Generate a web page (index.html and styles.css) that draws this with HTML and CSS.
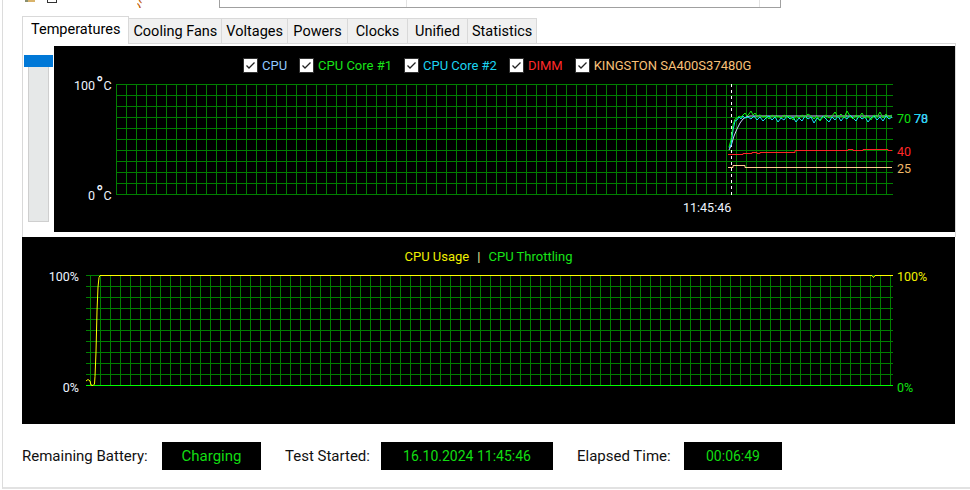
FILE: index.html
```html
<!DOCTYPE html>
<html>
<head>
<meta charset="utf-8">
<link rel="stylesheet" href="styles.css">
</head>
<body>
<div class="window">
  <div class="topstrip">
    <div class="ts-icon"></div>
    <div class="ts-check"></div>
    <div class="ts-paren"><span>( )</span></div>
    <div class="ts-box"><div class="ts-div ts-div1"></div><div class="ts-div ts-div2"></div></div>
  </div>
  <div class="tabs">
    <div class="tab active">Temperatures</div>
    <div class="tab">Cooling Fans</div>
    <div class="tab">Voltages</div>
    <div class="tab">Powers</div>
    <div class="tab">Clocks</div>
    <div class="tab">Unified</div>
    <div class="tab">Statistics</div>
  </div>
  <div class="tabpage">
    <div class="sidebar">
      <div class="sb-sel"></div>
      <div class="sb-list"></div>
    </div>
    <div class="temp-chart">
      <div class="temp-legend">
        <div class="lg-item"><svg class="cb" width="15" height="15" viewBox="0 0 15 15"><rect x="0.5" y="0.5" width="14" height="14" fill="#fff" stroke="#333"/><path d="M3.5 7.5L6 10L11.5 4.5" fill="none" stroke="#222" stroke-width="1.3"/></svg><span class="c-cpu">CPU</span></div>
        <div class="lg-item"><svg class="cb" width="15" height="15" viewBox="0 0 15 15"><rect x="0.5" y="0.5" width="14" height="14" fill="#fff" stroke="#333"/><path d="M3.5 7.5L6 10L11.5 4.5" fill="none" stroke="#222" stroke-width="1.3"/></svg><span class="c-core1">CPU Core #1</span></div>
        <div class="lg-item"><svg class="cb" width="15" height="15" viewBox="0 0 15 15"><rect x="0.5" y="0.5" width="14" height="14" fill="#fff" stroke="#333"/><path d="M3.5 7.5L6 10L11.5 4.5" fill="none" stroke="#222" stroke-width="1.3"/></svg><span class="c-core2">CPU Core #2</span></div>
        <div class="lg-item"><svg class="cb" width="15" height="15" viewBox="0 0 15 15"><rect x="0.5" y="0.5" width="14" height="14" fill="#fff" stroke="#333"/><path d="M3.5 7.5L6 10L11.5 4.5" fill="none" stroke="#222" stroke-width="1.3"/></svg><span class="c-dimm">DIMM</span></div>
        <div class="lg-item"><svg class="cb" width="15" height="15" viewBox="0 0 15 15"><rect x="0.5" y="0.5" width="14" height="14" fill="#fff" stroke="#333"/><path d="M3.5 7.5L6 10L11.5 4.5" fill="none" stroke="#222" stroke-width="1.3"/></svg><span class="c-ssd">KINGSTON SA400S37480G</span></div>
      </div>
      <svg class="plot temp-plot" width="901" height="162" viewBox="54 70 901 162">
        <defs>
          <pattern id="tgrid" x="116" y="84" width="10" height="11" patternUnits="userSpaceOnUse">
            <path d="M0.5 0V11M0 0.5H10" stroke="#008000" fill="none"/>
          </pattern>
        </defs>
        <rect x="116" y="84" width="777" height="111" fill="url(#tgrid)"/>
        <path d="M731.5 84V195" stroke="#fff" stroke-dasharray="3 3"/>
        <polyline class="ln" stroke="#c8d4ff" points="729,150 731,146 734,136 737,129 740,123 743,119 746,117 750,116 892,116"/>
        <polyline class="ln" stroke="#18e0f8" points="729,148 731,145 733,130 735,121 737,120 739,117 741,119 743,116 745,118 748,117 751,119 754,116 757,120 760,117 763,121 766,118 769,116 772,120 775,117 778,122 781,118 784,120 787,116 790,119 793,117 796,122 799,118 802,121 805,116 808,119 811,117 814,123 817,118 820,120 823,116 826,119 829,122 832,117 835,120 838,116 841,121 844,117 847,119 850,115 853,118 856,121 859,116 862,119 865,117 868,122 871,118 874,116 877,120 880,117 883,121 886,116 889,119 892,117"/>
        <polyline class="ln" stroke="#10f010" points="729,147 731,140 733,125 735,119 737,118 739,116 741,117 743,115 745,113 747,116 749,114 751,111 753,115 755,113 757,116 760,115 763,117 766,116 769,119 772,115 775,117 778,116 781,118 784,115 787,117 790,116 793,120 796,116 799,118 802,115 805,117 808,114 811,116 814,119 817,116 820,121 823,117 826,115 829,118 832,116 835,112 838,117 841,114 844,118 847,111 850,116 853,119 856,115 859,117 862,113 865,118 868,116 871,120 874,115 877,117 880,112 883,118 886,114 889,117 892,115"/>
        <polyline class="ln" stroke="#ff2424" points="728,154.5 743,154.5 743,153.5 752,153.5 752,152.5 757,152.5 757,153.5 760,153.5 760,152.5 795,152.5 795,150.5 848,150.5 848,149.5 853,149.5 853,150.5 863,150.5 863,149.5 888,149.5 888,150.5 892,150.5"/>
        <polyline class="ln" stroke="#ffd090" points="728,167.5 733,167.5 733,165.5 745,165.5 745,167.5 892,167.5"/>
        <text class="ax" y="90.3"><tspan x="74">100</tspan><tspan class="deg" x="96" y="90.5">°</tspan><tspan x="103.5" y="90.3">C</tspan></text>
        <text class="ax" y="200"><tspan x="88">0</tspan><tspan class="deg" x="96" y="200.2">°</tspan><tspan x="103.5" y="200">C</tspan></text>
        <text class="ax" x="683" y="212.3">11:45:46</text>
        <text class="ax t-green" x="897" y="123">70</text>
        <text class="ax t-lblue" x="914" y="123">78</text>
        <text class="ax t-cyan" x="914" y="123">70</text>
        <text class="ax t-red" x="897" y="156">40</text>
        <text class="ax t-orange" x="897" y="173">25</text>
      </svg>
    </div>
  </div>
  <div class="usage-chart">
    <div class="usage-legend"><span class="c-usage">CPU Usage</span><span class="c-sep">|</span><span class="c-thr">CPU Throttling</span></div>
    <svg class="plot" width="933" height="157" viewBox="22 267 933 157">
      <defs>
        <pattern id="ugrid" x="86" y="275" width="10" height="11" patternUnits="userSpaceOnUse">
          <path d="M4.5 0V11M0 0.5H10" stroke="#008000" fill="none"/>
        </pattern>
      </defs>
      <rect x="86" y="275" width="807" height="111" fill="url(#ugrid)"/>
      <path d="M86 385.5H893" stroke="#00ff00"/>
      <polyline class="ln" stroke="#ffff00" points="86,381 88,379.5 90,381 91,385 93,385.5 94.5,384 95,376.5 96,352 97,311 98,287 99,277.5 100,275.5 872,275.5 873.5,277.5 875,275.5 893,275.5"/>
      <text class="ax" x="79" y="281" text-anchor="end">100%</text>
      <text class="ax" x="79" y="392" text-anchor="end">0%</text>
      <text class="ax t-yellow" x="897" y="281">100%</text>
      <text class="ax t-green" x="897" y="392">0%</text>
    </svg>
  </div>
  <div class="status">
    <div class="st-label st-label1">Remaining Battery:</div>
    <div class="st-box st-box1">Charging</div>
    <div class="st-label st-label2">Test Started:</div>
    <div class="st-box st-box2">16.10.2024 11:45:46</div>
    <div class="st-label st-label3">Elapsed Time:</div>
    <div class="st-box st-box3">00:06:49</div>
  </div>
</div>
</body>
</html>
```
FILE: styles.css
```css
html, body {
  margin: 0;
  padding: 0;
  background: #ffffff;
}
body {
  font-family: Roboto, "Liberation Sans", sans-serif;
  color: #000;
}
.window {
  margin-left: 2px;
  border-left: 1px solid #dcdcdc;
  border-bottom: 2px solid #e2e2e2;
  height: 487px;
  padding-left: 19px;
  overflow: hidden;
}

/* cropped strip of controls above the tabs */
.topstrip {
  display: flex;
  align-items: flex-start;
  height: 8px;
  overflow: hidden;
}
.ts-icon {
  margin-left: 3px;
  width: 10px;
  height: 2px;
  background: linear-gradient(90deg, #8a8f70 0 30%, #d9b36a 30% 100%);
}
.ts-check {
  margin-left: 12px;
  width: 8px;
  height: 2px;
  border: 1px solid #333;
  border-top: none;
}
.ts-paren {
  margin-left: 80px;
  width: 13px;
  height: 8px;
  overflow: hidden;
}
.ts-paren span {
  display: block;
  font-size: 15px;
  line-height: 15px;
  margin-top: -12px;
  color: #c05a00;
}
.ts-box {
  display: flex;
  margin-left: 69px;
  width: 560px;
  height: 7px;
  border: 1px solid #a0a0a0;
  border-top: none;
}
.ts-div {
  width: 1px;
  height: 7px;
  background: #e3e3e3;
}
.ts-div1 { margin-left: 186px; }
.ts-div2 { margin-left: 352px; }

/* tabs */
.tabs {
  display: flex;
  align-items: flex-end;
  margin-top: 8px;
  height: 27px;
}
.tab {
  box-sizing: border-box;
  height: 25px;
  min-width: 61px;
  padding: 0 4px;
  margin-left: -1px;
  border: 1px solid #d9d9d9;
  border-bottom: none;
  background: #f0f0f0;
  font-size: 14.5px;
  display: flex;
  align-items: center;
  justify-content: center;
  white-space: nowrap;
}
.tab.active {
  height: 28px;
  margin-left: 0;
  margin-bottom: -1px;
  padding: 0 8px 3px;
  background: #ffffff;
  position: relative;
  z-index: 1;
}

.tabpage {
  display: flex;
  width: 932px;
  border: 1px solid #d9d9d9;
  border-bottom: none;
  padding: 2px 0 5px;
}
.sidebar {
  width: 29px;
  margin: 0 1px;
  display: flex;
  flex-direction: column;
  align-items: flex-start;
}
.sb-sel {
  margin-top: 9px;
  width: 29px;
  height: 12px;
  background: #0078d7;
}
.sb-list {
  margin-left: 4px;
  width: 19px;
  height: 154px;
  background: #e6e8e8;
  border: 1px solid #cfcfcf;
  border-top: none;
}

/* charts */
.temp-chart {
  width: 901px;
  height: 186px;
  background: #000;
}
.temp-legend {
  box-sizing: border-box;
  height: 24px;
  padding: 12px 0 0 189px;
  display: flex;
  align-items: flex-start;
  font-size: 13px;
  line-height: 15px;
}
.lg-item {
  display: flex;
  align-items: center;
  margin-right: 12px;
  white-space: nowrap;
}
.cb {
  display: block;
  margin-right: 4px;
}
.c-cpu { color: #90c8ff; }
.c-core1 { color: #18e418; }
.c-core2 { color: #1cd4f0; }
.c-dimm { color: #ff2a2a; }
.c-ssd { color: #f8c078; }

.plot {
  display: block;
}
.ln {
  fill: none;
  stroke-width: 1;
}
.ax {
  font-family: Roboto, "Liberation Sans", sans-serif;
  font-size: 12.5px;
  fill: #eef4ff;
}
.deg {
  font-size: 20px;
}
.t-green { fill: #10e010; }
.t-lblue { fill: #80c8ff; }
.t-cyan { fill: #18d8f0; }
.t-red { fill: #ff2828; }
.t-orange { fill: #f0b868; }
.t-yellow { fill: #f0f000; }

.usage-chart {
  width: 933px;
  height: 187px;
  background: #000;
}
.usage-legend {
  box-sizing: border-box;
  height: 30px;
  padding-top: 12px;
  display: flex;
  justify-content: center;
  line-height: 16px;
  font-size: 13px;
}
.c-usage { color: #f0f000; }
.c-sep { color: #f0f0a0; margin: 0 8px; }
.c-thr { color: #18e418; }

/* status row */
.status {
  display: flex;
  align-items: center;
  margin-top: 18px;
  height: 28px;
  font-size: 15px;
}
.st-label { white-space: nowrap; color: #111; }
.st-label1 { width: 140px; }
.st-label2 { margin-left: 24px; width: 96px; }
.st-label3 { margin-left: 24px; width: 107px; }
.st-box {
  height: 28px;
  background: #000;
  color: #12dc12;
  display: flex;
  align-items: center;
  justify-content: center;
  white-space: nowrap;
}
.st-box1 { width: 99px; }
.st-box2 { width: 172px; font-size: 14px; }
.st-box3 { width: 98px; font-size: 14px; }
```
